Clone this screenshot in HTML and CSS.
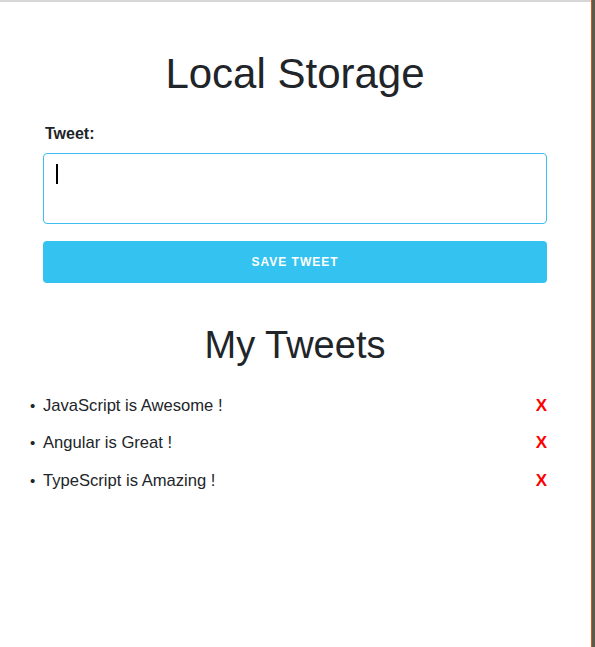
FILE: index.html
```html
<!DOCTYPE html>
<html lang="en">
<head>
<meta charset="utf-8">
<title>Local Storage</title>
<link rel="stylesheet" href="styles.css">
</head>
<body>
<div class="frame">
  <main class="page">
    <div class="container">
      <h1 class="title">Local Storage</h1>
      <form class="tweet-form">
        <label class="label" for="tweet">Tweet:</label>
        <div class="textbox" id="tweet" role="textbox"><span class="caret"></span></div>
        <button type="button" class="save-btn">SAVE TWEET</button>
      </form>
      <h2 class="subtitle">My Tweets</h2>
      <ul class="tweets">
        <li class="tweet"><span class="tweet-text">JavaScript is Awesome !</span><span class="remove">X</span></li>
        <li class="tweet"><span class="tweet-text">Angular is Great !</span><span class="remove">X</span></li>
        <li class="tweet"><span class="tweet-text">TypeScript is Amazing !</span><span class="remove">X</span></li>
      </ul>
    </div>
  </main>
  <div class="edge"></div>
</div>
</body>
</html>
```
FILE: styles.css
```css
* { box-sizing: border-box; }
html, body { margin: 0; padding: 0; height: 100%; }
body {
  font-family: "Liberation Sans", Arial, sans-serif;
  color: #212529;
  background: #ffffff;
}
.frame {
  display: flex;
  height: 647px;
}
.page {
  flex: 1;
  border-top: 2px solid #d6d6d6;
  background: #ffffff;
  padding: 0 44px 0 43px;
}
.edge {
  width: 4px;
  border-left: 1px solid #d2541f;
  background: #5b5a4b;
}
.container {
  width: 504px;
}
.title {
  margin: 48px 0 0;
  font-size: 42px;
  font-weight: 400;
  line-height: 48px;
  text-align: center;
}
.tweet-form {
  display: flex;
  flex-direction: column;
  margin-top: 24px;
}
.label {
  font-size: 16px;
  font-weight: 700;
  line-height: 24px;
  padding-left: 2px;
}
.textbox {
  margin-top: 7px;
  height: 71px;
  border: 1px solid #3fbfee;
  border-radius: 4px;
  padding: 10px 12px;
}
.caret {
  display: block;
  width: 2px;
  height: 20px;
  background: #000;
}
.save-btn {
  margin-top: 17px;
  height: 42px;
  border: none;
  border-radius: 4px;
  background: #34c3f0;
  color: #ffffff;
  font-family: "Liberation Sans", Arial, sans-serif;
  font-size: 12px;
  font-weight: 700;
  letter-spacing: 1px;
}
.subtitle {
  margin: 38px 0 0;
  font-size: 38px;
  font-weight: 400;
  line-height: 48px;
  text-align: center;
}
.tweets {
  margin: 25px 0 0;
  padding: 0;
  list-style: none;
}
.tweet {
  display: flex;
  align-items: baseline;
  font-size: 16.6px;
  line-height: 24px;
  margin-bottom: 13.3px;
}
.tweet::before {
  content: "\2022";
  width: 13px;
  margin-left: -13px;
  font-size: 15px;
}
.tweet-text { flex: 1; }
.remove {
  color: #ff0000;
  font-weight: 700;
  font-size: 17px;
}
```
